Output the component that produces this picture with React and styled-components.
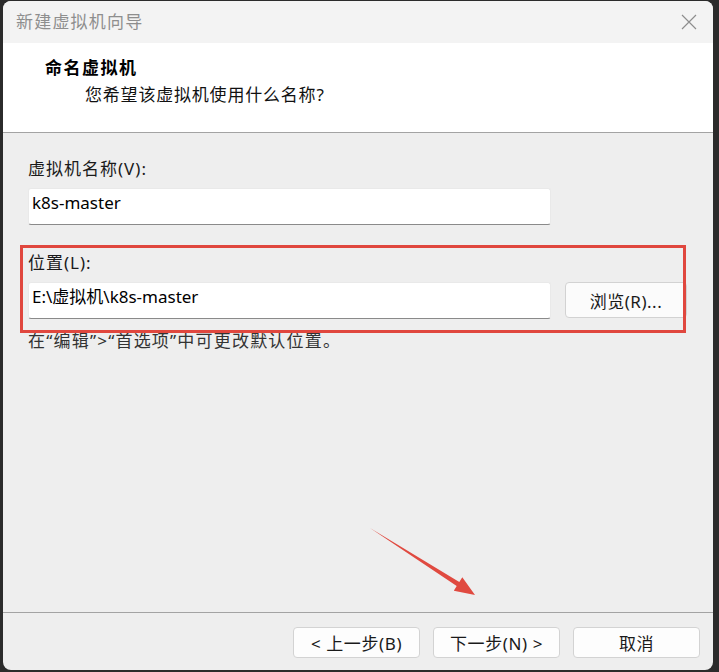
import React from "react";
import styled, { createGlobalStyle } from "styled-components";

const Global = createGlobalStyle`
  html, body { margin: 0; padding: 0; height: 100%; background: #2b2b2b; }
  body { overflow: hidden; }
  #root { padding: 1px 0 0 3px; }
`;

const FONT = `"Segoe UI", "Noto Sans", "Noto Sans CJK SC", sans-serif`;

const Window = styled.div`
  position: relative;
  width: 710px;
  height: 669px;
  border-radius: 8px;
  overflow: hidden;
  background: #eeeeee;
  display: flex;
  flex-direction: column;
  font-family: ${FONT};
  color: #111;
`;

const TitleBar = styled.div`
  height: 42px;
  flex: none;
  background: #f3f3f3;
  display: flex;
  align-items: center;
  justify-content: space-between;
  padding: 0 16px 0 13px;
`;

const TitleText = styled.div`
  font-size: 17px;
  line-height: 20px;
  color: #8e8e8e;
  letter-spacing: 1.2px;
`;

const CloseBtn = styled.div`
  width: 16px;
  height: 16px;
  display: flex;
  align-items: center;
  justify-content: center;
`;

const Header = styled.div`
  flex: none;
  background: #ffffff;
  border-bottom: 1px solid #a3a3a3;
  padding: 15px 0 0 42px;
  box-sizing: content-box;
  height: 74px;
`;

const HeaderTitle = styled.div`
  font-size: 17px;
  line-height: 20px;
  font-weight: 700;
  letter-spacing: 1.5px;
  color: #000;
`;

const HeaderSub = styled.div`
  margin: 7px 0 0 40px;
  font-size: 17px;
  line-height: 20px;
  color: #111;
  letter-spacing: 0.8px;
`;

const Body = styled.div`
  flex: 1;
  padding: 26px 0 0 25px;
`;

const Label = styled.div`
  font-size: 17px;
  line-height: 20px;
  color: #1a1a1a;
  letter-spacing: 1px;
  margin-top: ${(p) => p.$top || 0}px;
`;

const Row = styled.div`
  display: flex;
  align-items: flex-start;
  margin-top: 9px;
`;

const Field = styled.div`
  width: 523px;
  height: 37px;
  box-sizing: border-box;
  background: #ffffff;
  border: 1px solid #e9e9e9;
  border-bottom: 1px solid #8a8a8a;
  border-radius: 3px;
  padding: 3px 4px 0 3px;
  font-size: 17px;
  line-height: 22px;
  color: #000;
`;

const BrowseButton = styled.div`
  width: 122px;
  height: 36px;
  box-sizing: border-box;
  margin-left: 14px;
  background: #fbfbfb;
  border: 1px solid #d2d2d2;
  border-radius: 4px;
  display: flex;
  align-items: center;
  justify-content: center;
  font-size: 17px;
  letter-spacing: 0.5px;
  color: #1a1a1a;
`;

const Note = styled.div`
  margin-top: 12px;
  font-size: 17px;
  line-height: 20px;
  letter-spacing: 1.2px;
  color: #333;
`;

const Footer = styled.div`
  flex: none;
  box-sizing: border-box;
  border-top: 1px solid #a3a3a3;
  display: flex;
  justify-content: flex-end;
  align-items: flex-start;
  gap: 13px;
  padding: 14px 13px 0 0;
  height: 58px;
`;

const WizardButton = styled.div`
  width: 127px;
  height: 31px;
  box-sizing: border-box;
  background: #fdfdfd;
  border: 1px solid #d3d3d3;
  border-radius: 4px;
  display: flex;
  align-items: center;
  justify-content: center;
  font-size: 17px;
  letter-spacing: 0.6px;
  color: #1a1a1a;
  white-space: pre;
`;

const Highlight = styled.div`
  position: absolute;
  left: 17px;
  top: 244px;
  width: 666px;
  height: 88px;
  box-sizing: border-box;
  border: 3px solid #e0473e;
  pointer-events: none;
`;

const ArrowSvg = styled.svg`
  position: absolute;
  left: 362px;
  top: 519px;
  width: 120px;
  height: 85px;
  pointer-events: none;
`;

export default function App() {
  return (
    <>
      <Global />
      <Window>
        <TitleBar>
          <TitleText>新建虚拟机向导</TitleText>
          <CloseBtn>
            <svg width="16" height="16" viewBox="0 0 16 16">
              <path d="M1 1 L15 15 M15 1 L1 15" stroke="#8d8d8d" strokeWidth="1.2" fill="none" />
            </svg>
          </CloseBtn>
        </TitleBar>
        <Header>
          <HeaderTitle>命名虚拟机</HeaderTitle>
          <HeaderSub>您希望该虚拟机使用什么名称?</HeaderSub>
        </Header>
        <Body>
          <Label>虚拟机名称(V):</Label>
          <Row>
            <Field>k8s-master</Field>
          </Row>
          <Label $top={28}>位置(L):</Label>
          <Row>
            <Field>E:\虚拟机\k8s-master</Field>
            <BrowseButton>浏览(R)...</BrowseButton>
          </Row>
          <Note>在“编辑”&gt;“首选项”中可更改默认位置。</Note>
        </Body>
        <Footer>
          <WizardButton>{"< 上一步(B)"}</WizardButton>
          <WizardButton>{"下一步(N) >"}</WizardButton>
          <WizardButton>取消</WizardButton>
        </Footer>
        <Highlight />
        <ArrowSvg viewBox="365 520 120 85">
          <polygon
            points="370,528 459.3,581.9 462.3,577.3 475,595 453.8,590.7 456.7,586.1"
            fill="#e04a40"
          />
        </ArrowSvg>
      </Window>
    </>
  );
}
